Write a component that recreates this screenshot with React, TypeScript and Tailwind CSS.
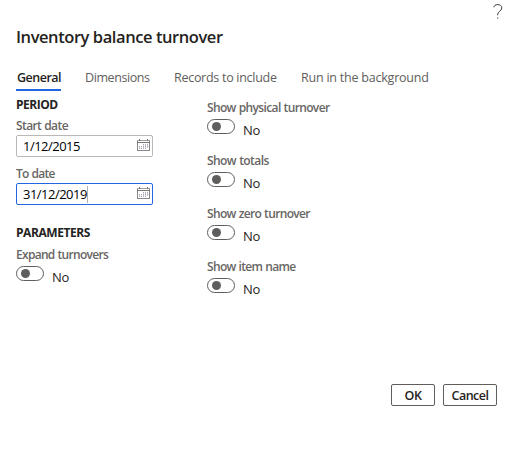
import React from "react";

const labelClass = "block h-[18px] whitespace-nowrap text-[12px] leading-[18px] font-semibold text-[#686664]";

function CalendarIcon() {
  return (
    <svg className="mt-[3px] self-start" width="13" height="12" viewBox="0 0 13 12" fill="none" shapeRendering="crispEdges">
      <path d="M0.5 1v10.5h12V1" stroke="#8a8886" />
      <path d="M0 1.5h13" stroke="#a19f9d" />
      <path d="M0 3.5h13" stroke="#797775" />
      <path d="M2.5 0v2M10.5 0v2" stroke="#797775" />
      <path d="M6 5.5h5M2 7.5h9M2 9.5h7" stroke="#aaa7b8" strokeWidth="1" strokeDasharray="1 1" />
      <path d="M6 6.5h5M2 8.5h9" stroke="#d5d2da" strokeDasharray="1 1" />
    </svg>
  );
}

function DateField({ label, tracking, value, focused = false }: { label: string; tracking: string; value: string; focused?: boolean }) {
  return (
    <div className="h-[48px]">
      <label className={`${labelClass} ${tracking}`}>{label}</label>
      <div className={`flex h-[22px] w-[137px] items-center justify-between rounded-[2px] border pr-[2px] pl-[6px] ${focused ? "border-[#2266e3]" : "border-[#bab8b7]"}`}>
        <span className="flex items-center text-[13px] leading-[20px] tracking-[-0.52px] whitespace-nowrap text-black">
          <span>{value}</span>
          {focused && <span className="h-[17px] w-px bg-[#b0b0b0]" />}
        </span>
        <CalendarIcon />
      </div>
    </div>
  );
}

function Toggle({ label, tracking }: { label: string; tracking: string }) {
  return (
    <div className="h-[53px]">
      <span className={`${labelClass} ${tracking}`}>{label}</span>
      <div className="mt-[2px] flex items-start">
        <span className="flex h-[15px] w-[28px] items-center rounded-full border border-[#605e5c] pl-[4px]">
          <span className="size-[9px] rounded-full bg-[#605e5c]" />
        </span>
        <span className="mt-[2px] ml-[8px] text-[13px] leading-[18px] tracking-[-0.3px] text-[#242321]">No</span>
      </div>
    </div>
  );
}

export default function App() {
  return (
    <main className="flex h-[453px] w-[516px] flex-col bg-white pl-[16px] font-['Open_Sans','Noto_Sans',sans-serif]">
      <header className="flex h-[68px] items-start justify-between pr-[13px]">
        <h1 className="mt-[25px] text-[16.5px] leading-[24px] font-semibold tracking-[-0.43px] whitespace-nowrap text-[#242321]">Inventory balance turnover</h1>
        <svg className="mt-[4px]" width="10" height="15" viewBox="0 0 10 15" fill="none" stroke="#3b3a39">
          <path d="M0.8 3.3C1 1.6 2.5 0.6 4.6 0.6c2.4 0 4.2 1 4.2 3.3 0 3-4.1 3.6-4.1 6.4v1M4.7 13.4v1.2" />
        </svg>
      </header>
      <nav className="flex h-[23px] items-start text-[12.5px] leading-[19px] whitespace-nowrap text-[#605e5c]">
        <span className="flex h-[23px] w-[45px] justify-center border-b-2 border-[#2266e3] pl-px font-semibold tracking-[-0.48px] text-[#242321]">General</span>
        <span className="ml-[24px] w-[65px] tracking-[-0.42px]">Dimensions</span>
        <span className="ml-[24px] w-[103px] tracking-[-0.28px]">Records to include</span>
        <span className="ml-[24px] tracking-[-0.22px]">Run in the background</span>
      </nav>
      <div className="flex h-[293px]">
        <section className="w-[191px] pt-[5px]">
          <h2 className="h-[21px] text-[12px] leading-[18px] font-bold tracking-[-0.5px] text-[#242321]">PERIOD</h2>
          <DateField label="Start date" tracking="tracking-[-0.6px] [word-spacing:0.5px]" value="1/12/2015" />
          <DateField label="To date" tracking="tracking-[-0.75px] [word-spacing:0.5px]" value="31/12/2019" focused />
          <h2 className="mt-[11px] h-[22px] text-[12px] leading-[18px] font-bold tracking-[-0.42px] text-[#242321]">PARAMETERS</h2>
          <Toggle label="Expand turnovers" tracking="tracking-[-0.7px] [word-spacing:0.5px]" />
        </section>
        <section className="pt-[8px]">
          <Toggle label="Show physical turnover" tracking="tracking-[-0.64px] [word-spacing:0.5px]" />
          <Toggle label="Show totals" tracking="tracking-[-0.56px] [word-spacing:0.5px]" />
          <Toggle label="Show zero turnover" tracking="tracking-[-0.66px] [word-spacing:0.5px]" />
          <Toggle label="Show item name" tracking="tracking-[-0.67px] [word-spacing:0.5px]" />
        </section>
      </div>
      <footer className="flex justify-end gap-[8px] pr-[19px] text-[12.5px] font-semibold tracking-[-0.5px] text-[#242321]">
        <button className="h-[22px] w-[44px] rounded-[2px] border border-[#605e5c] pt-px leading-[20px]">OK</button>
        <button className="h-[22px] w-[54px] rounded-[2px] border border-[#605e5c] pt-px leading-[20px]">Cancel</button>
      </footer>
    </main>
  );
}
